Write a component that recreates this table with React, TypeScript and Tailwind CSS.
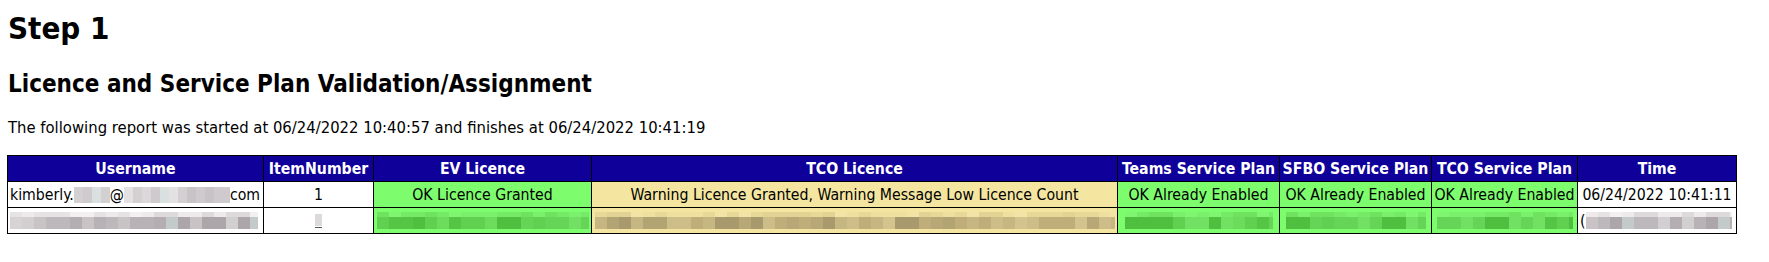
import React from "react";

const GREEN = "bg-[#7dfd6e]";
const YELLOW = "bg-[#f4e6a1]";

// Deterministic palette picker so the pixelated redactions look the same on every render
function pick(seed: number, palette: string[]) {
  const x = Math.sin(seed * 12.9898) * 43758.5453;
  const f = x - Math.floor(x);
  return palette[Math.floor(f * palette.length)];
}

const greyTop = ["#eeeaec", "#e6e3e4", "#f2f0f1", "#dedadc"];
const greyMain = ["#c9c3c6", "#b8b1b5", "#d7d3d5", "#bdb8bc", "#aca5a9", "#c4c9ca", "#b4aeb2", "#d2cfd0"];
const greyLight = ["#dcd8da", "#cfcacd", "#e4e1e2", "#d3d0d2", "#c8c3c6", "#dadfe0"];
const greenTop = ["#7bf06c", "#75ea66", "#80f570", "#6fe25f"];
const greenMain = ["#5fd04f", "#6ddc5d", "#54c545", "#66d456", "#4fbf40", "#72e062"];
const tanTop = ["#efe0a0", "#e8d898", "#f1e4a6", "#e2d294"];
const tanMain = ["#c6b682", "#b3a474", "#d3c48e", "#a89a6c", "#bfae7a", "#cdbd88", "#b8a878"];

function Mosaic({
  width,
  seed,
  top,
  main,
}: {
  width: number;
  seed: number;
  top: string[];
  main: string[];
}) {
  const block = 12;
  const n = Math.ceil(width / block);
  const cells = Array.from({ length: n }, (_, i) => i);
  return (
    <div className="flex flex-col" style={{ width }}>
      <div className="flex h-[5px] overflow-hidden">
        {cells.map((i) => (
          <span
            key={i}
            className="h-full w-[12px] shrink-0"
            style={{ backgroundColor: pick(seed + i * 7, top) }}
          />
        ))}
      </div>
      <div className="flex h-[12px] overflow-hidden">
        {cells.map((i) => (
          <span
            key={i}
            className="h-full w-[12px] shrink-0"
            style={{ backgroundColor: pick(seed + i * 3 + 101, main) }}
          />
        ))}
      </div>
    </div>
  );
}

function Blur({ width, seed }: { width: number; seed: number }) {
  const block = 9;
  const n = Math.ceil(width / block);
  return (
    <span className="inline-flex h-[16px] align-middle overflow-hidden" style={{ width }}>
      {Array.from({ length: n }, (_, i) => (
        <span
          key={i}
          className="h-full w-[9px] shrink-0"
          style={{ backgroundColor: pick(seed + i * 5, greyLight) }}
        />
      ))}
    </span>
  );
}

const headers = [
  "Username",
  "ItemNumber",
  "EV Licence",
  "TCO Licence",
  "Teams Service Plan",
  "SFBO Service Plan",
  "TCO Service Plan",
  "Time",
];
const widths = [256, 110, 218, 526, 162, 152, 146, 159];

const td = "border border-black px-[2px] h-[26px] align-middle";

export default function App() {
  return (
    <div className="min-h-screen bg-white px-[7px] pt-[12px] text-black font-['Tahoma','DejaVu_Sans_Condensed','DejaVu_Sans',sans-serif]">
      <h1 className="pl-[1px] text-[31px] font-bold leading-[33px]">Step 1</h1>
      <h2 className="mt-[26px] pl-[1px] text-[24px] font-bold leading-[26px]">
        Licence and Service Plan Validation/Assignment
      </h2>
      <p className="mt-[21px] pl-[1px] text-[16.5px] leading-[19px]">
        The following report was started at 06/24/2022 10:40:57 and finishes at 06/24/2022 10:41:19
      </p>
      <table className="mt-[18px] w-[1729px] table-fixed border-collapse border border-black text-[15.7px] leading-[18px]">
        <colgroup>
          {widths.map((w, i) => (
            <col key={i} style={{ width: w }} />
          ))}
        </colgroup>
        <thead>
          <tr className="bg-[#10009a] text-white">
            {headers.map((h) => (
              <th key={h} className={`${td} font-bold whitespace-nowrap`}>
                {h}
              </th>
            ))}
          </tr>
        </thead>
        <tbody>
          <tr>
            <td className={`${td} text-left whitespace-nowrap`}>
              kimberly.
              <Blur width={36} seed={3} />
              @
              <Blur width={106} seed={17} />
              com
            </td>
            <td className={`${td} text-center`}>1</td>
            <td className={`${td} ${GREEN} text-center`}>OK Licence Granted</td>
            <td className={`${td} ${YELLOW} text-center`}>
              Warning Licence Granted, Warning Message Low Licence Count
            </td>
            <td className={`${td} ${GREEN} text-center whitespace-nowrap`}>OK Already Enabled</td>
            <td className={`${td} ${GREEN} text-center whitespace-nowrap`}>OK Already Enabled</td>
            <td className={`${td} ${GREEN} text-center whitespace-nowrap`}>OK Already Enabled</td>
            <td className={`${td} text-center whitespace-nowrap`}>06/24/2022 10:41:11</td>
          </tr>
          <tr>
            <td className={td}>
              <Mosaic width={248} seed={5} top={greyTop} main={greyMain} />
            </td>
            <td className={td}>
              <div className="mx-auto flex w-[8px] flex-col items-center">
                <span className="h-[12px] w-[7px] bg-[#dcdadb]" />
                <span className="mt-[1px] h-[1px] w-[7px] bg-[#555]" />
              </div>
            </td>
            <td className={`${td} ${GREEN}`}>
              <div className="flex justify-center">
                <Mosaic width={212} seed={11} top={greenTop} main={greenMain} />
              </div>
            </td>
            <td className={`${td} ${YELLOW}`}>
              <div className="flex justify-center">
                <Mosaic width={520} seed={23} top={tanTop} main={tanMain} />
              </div>
            </td>
            <td className={`${td} ${GREEN}`}>
              <div className="flex justify-center">
                <Mosaic width={148} seed={31} top={greenTop} main={greenMain} />
              </div>
            </td>
            <td className={`${td} ${GREEN}`}>
              <div className="flex justify-center">
                <Mosaic width={140} seed={41} top={greenTop} main={greenMain} />
              </div>
            </td>
            <td className={`${td} ${GREEN}`}>
              <div className="flex justify-center">
                <Mosaic width={136} seed={53} top={greenTop} main={greenMain} />
              </div>
            </td>
            <td className={td}>
              <div className="flex items-center">
                <span className="leading-[18px]">(</span>
                <Mosaic width={146} seed={61} top={greyTop} main={greyMain} />
              </div>
            </td>
          </tr>
        </tbody>
      </table>
    </div>
  );
}
